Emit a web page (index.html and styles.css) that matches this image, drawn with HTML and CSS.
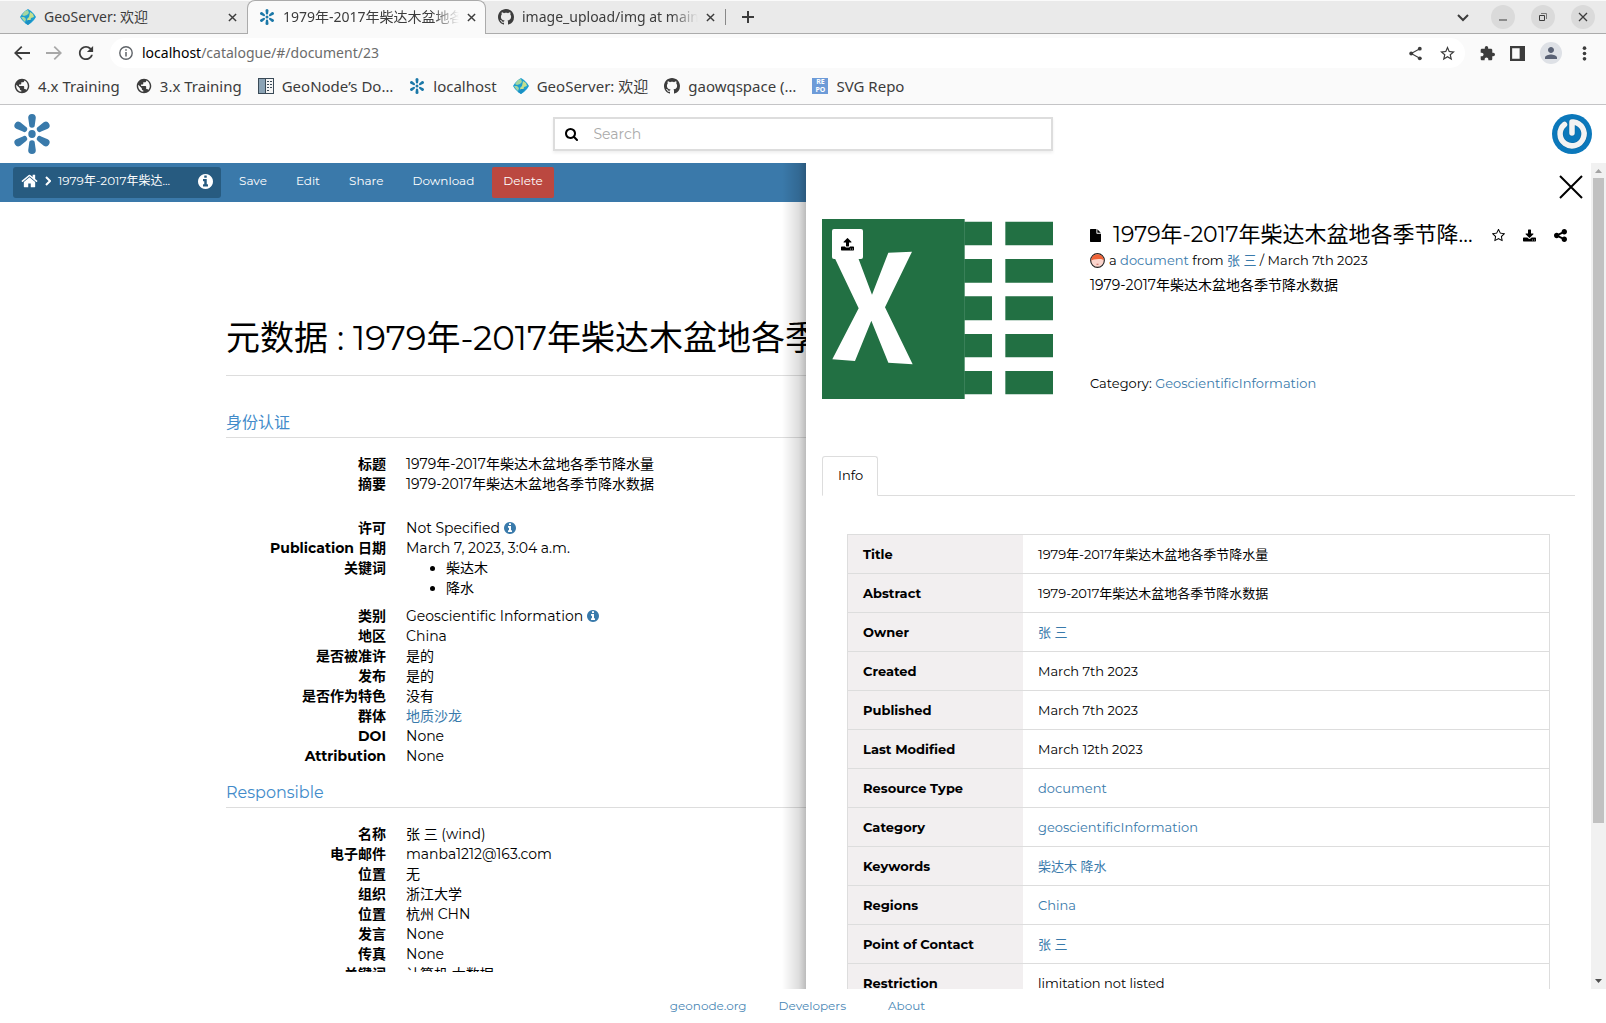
FILE: index.html
```html
<!DOCTYPE html>
<html lang="zh-CN">
<head>
<meta charset="utf-8">
<meta name="viewport" content="width=device-width, initial-scale=1">
<title>1979年-2017年柴达木盆地各季节降水量</title>
<link rel="stylesheet" href="styles.css">
</head>
<body>
<svg class="sprite" aria-hidden="true">
  <symbol id="geonode" viewBox="0 0 38 40">
    <ellipse cx="19" cy="20" rx="3.700" ry="3.900"/>
    <path d="M15.200 3.800a3.800 3.800 0 0 1 7.600 0L21.800 11a2.800 2.800 0 0 1-5.600 0z"/>
    <path d="M15.200 3.800a3.800 3.800 0 0 1 7.600 0L21.800 11a2.800 2.800 0 0 1-5.600 0z" transform="rotate(58 19 20)"/>
    <path d="M15.200 3.800a3.800 3.800 0 0 1 7.600 0L21.800 11a2.800 2.800 0 0 1-5.600 0z" transform="rotate(122 19 20)"/>
    <path d="M15.200 3.800a3.800 3.800 0 0 1 7.600 0L21.800 11a2.800 2.800 0 0 1-5.600 0z" transform="rotate(180 19 20)"/>
    <path d="M15.200 3.800a3.800 3.800 0 0 1 7.600 0L21.800 11a2.800 2.800 0 0 1-5.600 0z" transform="rotate(238 19 20)"/>
    <path d="M15.200 3.800a3.800 3.800 0 0 1 7.600 0L21.800 11a2.800 2.800 0 0 1-5.600 0z" transform="rotate(302 19 20)"/>
  </symbol>
  <symbol id="geoserver" viewBox="0 0 16 16">
    <path d="M8 0l3 2 3 3 2 3-2 3-3 3-3 2-3-2-3-3-2-3 2-3 3-3z" fill="#1d9fd0"/>
    <path d="M5 2l3-1 1 3-2 2-3 1-2-1zM1 8l3 0 2 2-1 3-2-2z" fill="#a5d6a0"/>
    <path d="M10 3l3 2 1 3-3 1-1 4-2 0-1-3 2-2z" fill="#c5df8c"/>
    <path d="M8 11l4 0-2 3-2 2-3-2z" fill="#1a8fc4"/>
  </symbol>
  <symbol id="github" viewBox="0 0 16 16"><path d="M8 0C3.580 0 0 3.580 0 8c0 3.540 2.290 6.530 5.470 7.590.4.070.55-.17.55-.38 0-.19-.01-.82-.01-1.490-2.010.37-2.530-.49-2.690-.94-.09-.23-.48-.94-.82-1.130-.28-.15-.68-.52-.01-.53.63-.01 1.080.58 1.230.82.72 1.210 1.870.87 2.330.66.07-.52.28-.87.51-1.070-1.780-.2-3.640-.89-3.640-3.950 0-.87.31-1.590.82-2.150-.08-.2-.36-1.020.08-2.120 0 0 .67-.21 2.200.82.64-.18 1.320-.27 2-.27s1.360.09 2 .27c1.530-1.040 2.200-.82 2.200-.82.44 1.100.16 1.920.08 2.120.51.56.82 1.270.82 2.150 0 3.070-1.870 3.750-3.650 3.950.29.25.54.73.54 1.480 0 1.070-.01 1.930-.01 2.200 0 .21.15.46.55.38A8.010 8.010 0 0 0 16 8c0-4.420-3.580-8-8-8z"/></symbol>
  <symbol id="globe" viewBox="1 1 22 22"><path d="M12 2C6.480 2 2 6.480 2 12s4.480 10 10 10 10-4.480 10-10S17.520 2 12 2zm-1 17.930c-3.950-.49-7-3.850-7-7.930 0-.62.08-1.210.21-1.790L9 15v1c0 1.100.9 2 2 2v1.930zm6.900-2.540c-.26-.81-1-1.390-1.900-1.390h-1v-3c0-.55-.45-1-1-1H8v-2h2c.55 0 1-.45 1-1V7h2c1.100 0 2-.9 2-2v-.41c2.930 1.190 5 4.060 5 7.410 0 2.080-.8 3.970-2.100 5.390z"/></symbol>
  <symbol id="cross" viewBox="0 0 10 10"><path d="M1 1l8 8M9 1L1 9" fill="none" stroke="currentColor" stroke-width="1.600"/></symbol>
  <symbol id="info" viewBox="128 128 1536 1536"><path d="M1152 1376v-160q0-14-9-23t-23-9h-96v-512q0-14-9-23t-23-9h-320q-14 0-23 9t-9 23v160q0 14 9 23t23 9h96v320h-96q-14 0-23 9t-9 23v160q0 14 9 23t23 9h448q14 0 23-9t9-23zm-128-896v-160q0-14-9-23t-23-9h-192q-14 0-23 9t-9 23v160q0 14 9 23t23 9h192q14 0 23-9t9-23zm640 416q0 209-103 385.500t-279.500 279.500-385.500 103-385.500-103-279.500-279.500-103-385.500 103-385.500 279.500-279.500 385.500-103 385.500 103 279.500 279.500 103 385.500z"/></symbol>
</svg>

<div class="browser">
  <div class="tabstrip">
    <div class="tab">
      <svg class="favicon"><use href="#geoserver"/></svg>
      <span class="tab-title">GeoServer: 欢迎</span>
      <button class="tab-close" aria-label="Close tab"><svg><use href="#cross"/></svg></button>
    </div>
    <div class="tab tab-active">
      <svg class="favicon brand"><use href="#geonode"/></svg>
      <span class="tab-title">1979年-2017年柴达木盆地各季</span>
      <button class="tab-close" aria-label="Close tab"><svg><use href="#cross"/></svg></button>
    </div>
    <div class="tab tab-last">
      <svg class="favicon"><use href="#github"/></svg>
      <span class="tab-title">image_upload/img at main</span>
      <button class="tab-close" aria-label="Close tab"><svg><use href="#cross"/></svg></button>
    </div>
    <button class="new-tab" aria-label="New tab"><svg viewBox="0 0 12 12"><path d="M6 0v12M0 6h12" stroke="currentColor" stroke-width="2"/></svg></button>
    <div class="window-controls">
      <button class="plain" aria-label="Search tabs"><svg viewBox="0 0 12 12"><path d="M1 4l5 5 5-5" fill="none" stroke="currentColor" stroke-width="2"/></svg></button>
      <button aria-label="Minimize"><svg viewBox="0 0 12 12"><path d="M2 9h8" stroke="currentColor"/></svg></button>
      <button aria-label="Restore"><svg viewBox="0 0 12 12"><path d="M2.500 4.500h5v5h-5z" fill="none" stroke="currentColor"/><path d="M4 2.500h5.500V8" fill="none" stroke="#777"/></svg></button>
      <button aria-label="Close window"><svg viewBox="0 0 12 12"><path d="M2 2l8 8M10 2l-8 8" stroke="currentColor" stroke-width="1.300"/></svg></button>
    </div>
  </div>

  <div class="navbar">
    <button class="nav-btn" aria-label="Back"><svg viewBox="3 3 18 18"><path d="M21 11H6.830l5.590-5.590L11 4l-8 8 8 8 1.410-1.410L6.830 13H21v-2z"/></svg></button>
    <button class="nav-btn nav-off" aria-label="Forward"><svg viewBox="3 3 18 18"><path d="M3 11h14.170l-5.590-5.590L13 4l8 8-8 8-1.410-1.410L17.170 13H3v-2z"/></svg></button>
    <button class="nav-btn" aria-label="Reload"><svg viewBox="3 3 18 18"><path d="M17.650 6.350C16.200 4.900 14.210 4 12 4c-4.420 0-7.990 3.580-7.990 8s3.570 8 7.990 8c3.730 0 6.840-2.550 7.730-6h-2.080c-.82 2.330-3.040 4-5.650 4-3.310 0-6-2.690-6-6s2.690-6 6-6c1.660 0 3.140.69 4.220 1.780L13 11h7V4l-2.350 2.350z"/></svg></button>
    <div class="omnibox">
      <svg class="site-info" viewBox="0 0 14 14"><circle cx="7" cy="7" r="6.200" fill="none" stroke="currentColor" stroke-width="1.400"/><path d="M7 6v4.500M7 3.300v1.500" stroke="currentColor" stroke-width="1.500"/></svg>
      <a class="url" href="#/document/23"><b>localhost</b>/catalogue/#/document/23</a>
      <button aria-label="Share page"><svg viewBox="0 0 14 14"><path d="M11 2.500L3 7l8 4.500" fill="none" stroke="currentColor"/><circle cx="11" cy="2.500" r="1.800"/><circle cx="3" cy="7" r="1.800"/><circle cx="11" cy="11.500" r="1.800"/></svg></button>
      <button aria-label="Bookmark"><svg viewBox="2 2 20 20"><path d="M22 9.240l-7.190-.62L12 2 9.190 8.630 2 9.240l5.460 4.730L5.820 21 12 17.270 18.180 21l-1.630-7.030L22 9.240zM12 15.400l-3.760 2.270 1-4.280-3.320-2.880 4.380-.38L12 6.100l1.710 4.040 4.380.38-3.320 2.880 1 4.280L12 15.400z"/></svg></button>
    </div>
    <div class="nav-tools">
      <button aria-label="Extensions"><svg viewBox="1 1 22 22"><path d="M20.500 11H19V7c0-1.100-.9-2-2-2h-4V3.500a2.500 2.500 0 0 0-5 0V5H4c-1.100 0-1.990.9-1.990 2v3.800H3.500c1.490 0 2.700 1.210 2.700 2.700s-1.210 2.700-2.700 2.700H2V20c0 1.100.9 2 2 2h3.800v-1.500c0-1.490 1.210-2.700 2.700-2.700s2.700 1.210 2.700 2.700V22H17c1.100 0 2-.9 2-2v-4h1.500a2.500 2.500 0 0 0 0-5z"/></svg></button>
      <button aria-label="Side panel"><svg viewBox="0 0 14 14"><path d="M0 0h14v14H0zM2 2v10h7V2z" fill-rule="evenodd"/></svg></button>
      <button class="profile" aria-label="Profile"><svg viewBox="4 4 16 16"><path d="M12 12c2.210 0 4-1.790 4-4s-1.790-4-4-4-4 1.790-4 4 1.790 4 4 4zm0 2c-2.670 0-8 1.340-8 4v2h16v-2c0-2.660-5.330-4-8-4z"/></svg></button>
      <button aria-label="Menu"><svg viewBox="0 0 14 14"><circle cx="7" cy="2" r="1.700"/><circle cx="7" cy="7" r="1.700"/><circle cx="7" cy="12" r="1.700"/></svg></button>
    </div>
  </div>

  <nav class="bookmarks">
    <a href="#"><svg><use href="#globe"/></svg>4.x Training</a>
    <a href="#"><svg><use href="#globe"/></svg>3.x Training</a>
    <a href="#"><svg viewBox="0 0 16 16"><path d="M0 0h16v16H0z" fill="#3a4a57"/><path d="M1 1h6v14H1z" fill="#8ba3b5"/><path d="M8 1h7v14H8z" fill="#f4f4f4"/><path d="M9 3.500h2M12 3.500h2M9 6.500h2M12 6.500h2M9 9.500h2M12 9.500h2M9 12.500h2" stroke="#3a4a57"/></svg>GeoNode’s Do…</a>
    <a href="#"><svg class="brand"><use href="#geonode"/></svg>localhost</a>
    <a href="#"><svg><use href="#geoserver"/></svg>GeoServer: 欢迎</a>
    <a href="#"><svg><use href="#github"/></svg>gaowqspace (…</a>
    <a href="#"><span class="repo-icon">RE<br>PO</span>SVG Repo</a>
  </nav>
</div>

<header class="site-header">
  <a class="logo" href="#" aria-label="GeoNode"><svg><use href="#geonode"/></svg></a>
  <label class="search">
    <svg viewBox="64 128 1664 1664" aria-hidden="true"><path d="M1216 832q0-185-131.500-316.500t-316.500-131.500-316.500 131.500-131.500 316.500 131.500 316.500 316.500 131.500 316.500-131.500 131.500-316.500zm512 832q0 52-38 90t-90 38q-54 0-90-38l-343-342q-179 124-399 124-143 0-273.500-55.500t-225-150-150-225-55.500-273.500 55.500-273.500 150-225 225-150 273.500-55.500 273.500 55.500 225 150 150 225 55.500 273.500q0 220-124 399l343 343q37 37 37 90z"/></svg>
    <input type="search" placeholder="Search" aria-label="Search">
  </label>
  <button class="account" aria-label="Account">
    <svg viewBox="0 0 40 40"><circle cx="20" cy="20" r="20" fill="#0b78bb"/><path d="M12.500 10.500a12 12 0 1 0 9-2.600L20 8v11" fill="none" stroke="#09578a" stroke-width="6.500" stroke-linecap="round" stroke-linejoin="round" opacity=".5"/><path d="M12.500 10.500a12 12 0 1 0 9-2.600L20 8v11" fill="none" stroke="#f3f3f3" stroke-width="5.500" stroke-linecap="round" stroke-linejoin="round"/></svg>
  </button>
</header>

<div class="workspace">
  <nav class="actionbar">
    <div class="crumb">
      <a href="#" aria-label="Home"><svg class="home" viewBox="32 224 1728 1344"><path d="M1472 992v480q0 26-19 45t-45 19h-384v-384h-256v384h-384q-26 0-45-19t-19-45v-480q0-1 .5-3t.5-3l575-474 575 474q1 2 1 6zm223-69l-62 74q-8 9-21 11h-3q-13 0-21-7l-692-577-692 577q-12 8-24 7-13-2-21-11l-62-74q-8-10-7-23.500t11-21.500l719-599q32-26 76-26t76 26l244 204v-195q0-14 9-23t23-9h192q14 0 23 9t9 23v408l219 182q10 8 11 21.500t-7 23.500z"/></svg></a>
      <svg class="chevron" viewBox="0 0 6 10"><path d="M1 1l4 4-4 4" fill="none" stroke="currentColor" stroke-width="2"/></svg>
      <span class="crumb-title">1979年-2017年柴达...</span>
      <button class="crumb-info" aria-label="Details"><svg><use href="#info"/></svg></button>
    </div>
    <button>Save</button>
    <button>Edit</button>
    <button>Share</button>
    <button>Download</button>
    <button class="danger">Delete</button>
  </nav>

  <main class="document">
    <h1>元数据 : 1979年-2017年柴达木盆地各季节降水量</h1>
    <h2>身份认证</h2>
    <dl>
      <dt>标题</dt><dd>1979年-2017年柴达木盆地各季节降水量</dd>
      <dt>摘要</dt><dd class="spaced">1979-2017年柴达木盆地各季节降水数据</dd>
      <dt>许可</dt><dd>Not Specified <svg class="hint"><use href="#info"/></svg></dd>
      <dt>Publication 日期</dt><dd>March 7, 2023, 3:04 a.m.</dd>
      <dt>关键词</dt><dd><ul><li>柴达木</li><li>降水</li></ul></dd>
      <dt>类别</dt><dd>Geoscientific Information <svg class="hint"><use href="#info"/></svg></dd>
      <dt>地区</dt><dd>China</dd>
      <dt>是否被准许</dt><dd>是的</dd>
      <dt>发布</dt><dd>是的</dd>
      <dt>是否作为特色</dt><dd>没有</dd>
      <dt>群体</dt><dd><a href="#">地质沙龙</a></dd>
      <dt>DOI</dt><dd>None</dd>
      <dt>Attribution</dt><dd>None</dd>
    </dl>
    <h2>Responsible</h2>
    <dl>
      <dt>名称</dt><dd>张 三 (wind)</dd>
      <dt>电子邮件</dt><dd>manba1212@163.com</dd>
      <dt>位置</dt><dd>无</dd>
      <dt>组织</dt><dd>浙江大学</dd>
      <dt>位置</dt><dd>杭州 CHN</dd>
      <dt>发言</dt><dd>None</dd>
      <dt>传真</dt><dd>None</dd>
      <dt>关键词</dt><dd>计算机 大数据</dd>
    </dl>
  </main>

  <aside class="panel">
    <div class="panel-body">
      <button class="panel-close" aria-label="Close panel"><svg viewBox="0 0 24 24"><path d="M1 1l22 22M23 1L1 23" stroke="currentColor" stroke-width="2"/></svg></button>
      <section class="summary">
        <div class="thumb">
          <svg class="thumb-img" viewBox="0 0 693 540" role="img" aria-label="Spreadsheet">
            <path d="M0 0h428v540H0z" fill="#227043"/>
            <path d="M427 8h83v71h-83zM427 120h83v71h-83zM427 232h83v72h-83zM427 345h83v70h-83zM427 456h83v70h-83zM550 8h143v71H550zM550 120h143v71H550zM550 232h143v72H550zM550 345h143v70H550zM550 456h143v70H550z" fill="#227043"/>
            <path d="M32 104l71-2 47 125 49-126 71-3-81 167 83 171-73-5-51-126-49 121-68-5 79-153z" fill="#fff"/>
          </svg>
          <button class="upload" aria-label="Upload thumbnail"><svg viewBox="64 64 1664 1664"><path d="M1344 1472q0-26-19-45t-45-19-45 19-19 45 19 45 45 19 45-19 19-45zm256 0q0-26-19-45t-45-19-45 19-19 45 19 45 45 19 45-19 19-45zm128-224v320q0 40-28 68t-68 28h-1472q-40 0-68-28t-28-68v-320q0-40 28-68t68-28h427q21 56 70.500 92t110.500 36h256q61 0 110.500-36t70.500-92h427q40 0 68 28t28 68zm-325-648q-17 40-59 40h-256v448q0 26-19 45t-45 19h-256q-26 0-45-19t-19-45v-448h-256q-42 0-59-40-17-39 14-69l448-448q18-19 45-19t45 19l448 448q31 30 14 69z"/></svg></button>
        </div>
        <div class="about">
          <div class="title-row">
            <svg class="file" viewBox="128 0 1536 1792"><path d="M1152 512v-472q22 14 36 28l408 408q14 14 28 36h-472zm-128 32q0 40 28 68t68 28h544v1056q0 40-28 68t-68 28h-1344q-40 0-68-28t-28-68v-1600q0-40 28-68t68-28h800v544z"/></svg>
            <h2>1979年-2017年柴达木盆地各季节降...</h2>
            <div class="title-actions">
              <button aria-label="Favorite"><svg viewBox="64 64 1664 1664"><path d="M1201 1004l306-297-422-62-189-382-189 382-422 62 306 297-73 421 378-199 377 199zm527-357q0 22-26 48l-363 354 86 500q1 7 1 20 0 50-41 50-19 0-40-12l-449-236-449 236q-22 12-40 12-21 0-31.500-14.500t-10.500-35.500q0-6 2-20l86-500-364-354q-25-27-25-48 0-37 56-46l502-73 225-455q19-41 49-41t49 41l225 455 502 73q56 9 56 46z"/></svg></button>
              <button aria-label="Download"><svg viewBox="64 0 1664 1536"><path d="M1344 1344q0-26-19-45t-45-19-45 19-19 45 19 45 45 19 45-19 19-45zm256 0q0-26-19-45t-45-19-45 19-19 45 19 45 45 19 45-19 19-45zm128-224v320q0 40-28 68t-68 28h-1472q-40 0-68-28t-28-68v-320q0-40 28-68t68-28h465l135 136q58 56 136 56t136-56l136-136h464q40 0 68 28t28 68zm-325-569q17 41-14 70l-448 448q-18 19-45 19t-45-19l-448-448q-31-29-14-70 17-39 59-39h256v-448q0-26 19-45t45-19h256q26 0 45 19t19 45v448h256q42 0 59 39z"/></svg></button>
              <button aria-label="Share"><svg viewBox="128 128 1536 1536"><path d="M1344 1024q133 0 226.500 93.500t93.500 226.500-93.500 226.500-226.500 93.500-226.500-93.500-93.500-226.500q0-12 2-34l-360-180q-92 86-218 86-133 0-226.500-93.500t-93.500-226.500 93.500-226.500 226.500-93.500q126 0 218 86l360-180q-2-22-2-34 0-133 93.500-226.500t226.500-93.500 226.500 93.500 93.500 226.500-93.500 226.500-226.500 93.500q-126 0-218-86l-360 180q2 22 2 34t-2 34l360 180q92-86 218-86z"/></svg></button>
            </div>
          </div>
          <p class="byline">
            <svg class="face" viewBox="0 0 16 16"><circle cx="8" cy="8" r="7.300" fill="#fbd5cd" stroke="#222" stroke-width="1.200"/><path d="M1.300 8a6.700 6.700 0 0 1 13.400 0c-1-.8-2-1.500-4-1.500S5 6.500 1.300 8z" fill="#ef6236"/><path d="M7 12h2" stroke="#c0605a"/></svg>
            <span>a <a href="#">document</a> from <a href="#">张 三</a> / March 7th 2023</span>
          </p>
          <p class="abstract">1979-2017年柴达木盆地各季节降水数据</p>
          <p class="category">Category: <a href="#">GeoscientificInformation</a></p>
        </div>
      </section>
      <div class="tabs"><button class="info-tab">Info</button></div>
      <table class="facts">
        <tbody>
          <tr><th scope="row">Title</th><td>1979年-2017年柴达木盆地各季节降水量</td></tr>
          <tr><th scope="row">Abstract</th><td>1979-2017年柴达木盆地各季节降水数据</td></tr>
          <tr><th scope="row">Owner</th><td><a href="#">张 三</a></td></tr>
          <tr><th scope="row">Created</th><td>March 7th 2023</td></tr>
          <tr><th scope="row">Published</th><td>March 7th 2023</td></tr>
          <tr><th scope="row">Last Modified</th><td>March 12th 2023</td></tr>
          <tr><th scope="row">Resource Type</th><td><a href="#">document</a></td></tr>
          <tr><th scope="row">Category</th><td><a href="#">geoscientificInformation</a></td></tr>
          <tr><th scope="row">Keywords</th><td><a href="#">柴达木</a> <a href="#">降水</a></td></tr>
          <tr><th scope="row">Regions</th><td><a href="#">China</a></td></tr>
          <tr><th scope="row">Point of Contact</th><td><a href="#">张 三</a></td></tr>
          <tr><th scope="row">Restriction</th><td>limitation not listed</td></tr>
        </tbody>
      </table>
    </div>
    <div class="scrollbar" aria-hidden="true">
      <svg class="arrow-up" viewBox="0 0 15 15"><path d="M4 10l3.500-4L11 10z"/></svg>
      <div class="track"><div class="track-thumb"></div></div>
      <svg class="arrow-down" viewBox="0 0 15 15"><path d="M4 5l3.500 4L11 5z"/></svg>
    </div>
  </aside>
</div>

<footer class="footer">
  <a href="#">geonode.org</a>
  <a href="#">Developers</a>
  <a class="footer-about" href="#">About</a>
</footer>
</body>
</html>
```
FILE: styles.css
```css
:root {
  --blue: #397aab;
  --line: #ddd;
  --ui: "Noto Sans", "Noto Sans CJK SC", sans-serif;
  --site: Montserrat, Inter, "Noto Sans CJK SC", sans-serif;
}

* { box-sizing: border-box; }

body {
  margin: 0;
  height: 100vh;
  display: flex;
  flex-direction: column;
  overflow: hidden;
  background: #fff;
  color: #000;
  font: 14px/20px var(--site);
}

button {
  margin: 0;
  padding: 0;
  border: 0;
  background: none;
  color: inherit;
  font: inherit;
}

svg { display: block; flex: none; fill: currentColor; }
a { color: var(--blue); text-decoration: none; }
h1, h2, p, dl, dd, ul { margin: 0; font-weight: 400; }
.sprite { position: absolute; width: 0; height: 0; }

/* Browser window */
.browser {
  flex: none;
  background: #fafafa;
  border-bottom: 1px solid #c4c4c6;
  color: #3c3c3c;
  font: 14px/20px var(--ui);
}

.tabstrip {
  display: flex;
  height: 34px;
  padding: 0 11px 0 8px;
  background: #eaeaea;
  box-shadow: inset 0 1px #fafafa, inset 0 -1px #ababab;
}

.tab {
  display: flex;
  align-items: center;
  gap: 8px;
  width: 239px;
  padding: 0 10px 0 12px;
}
.tab-active {
  background: #fafafa;
  border: 1px solid #ababab;
  border-bottom: 0;
  border-radius: 8px 8px 0 0;
  padding: 0 9px 1px 11px;
}
.tab-last .tab-title, .tab-active .tab-title {
  mask-image: linear-gradient(to right, #000 85%, transparent);
}
.tab-title { flex: 1; min-width: 0; overflow: hidden; white-space: nowrap; }
.favicon { width: 16px; height: 16px; }
.brand { color: #1b78a8; }
.tab-close svg { width: 9px; height: 9px; }
.new-tab { margin: 9px 0; padding: 0 16px; border-left: 1px solid #888; }
.new-tab svg { width: 12px; height: 12px; }

.window-controls { display: flex; align-items: center; gap: 16px; margin-left: auto; }
.window-controls button {
  display: grid;
  place-items: center;
  width: 24px;
  height: 24px;
  border-radius: 50%;
  background: #dadada;
}
.window-controls .plain { background: none; }
.window-controls svg { width: 12px; height: 12px; }

.navbar { display: flex; align-items: center; height: 38px; padding: 0 14px; }
.nav-btn svg { width: 16px; height: 16px; }
.nav-btn { margin-right: 16px; }
.nav-off { color: #a8a8a8; }
.omnibox {
  flex: 1;
  display: flex;
  align-items: center;
  height: 30px;
  gap: 17px;
  padding: 0 10px 0 9px;
  border-radius: 15px;
  background: #fff;
}
.omnibox button svg { width: 15px; height: 15px; }
.site-info { width: 14px; height: 14px; color: #5f6368; }
.url { flex: 1; margin-left: -8px; color: #6c6c6c; }
.url b { color: #000; font-weight: 400; }
.nav-tools { display: flex; align-items: center; gap: 15px; padding-left: 15px; }
.nav-tools svg { width: 15px; height: 15px; }
.nav-tools .profile { padding: 5px; border-radius: 50%; background: #dee1e6; color: #5a6275; }
.nav-tools .profile svg { width: 12px; height: 12px; }

.bookmarks { display: flex; gap: 16px; height: 32px; padding: 0 14px 4px; align-items: center; }
.bookmarks a { display: flex; align-items: center; gap: 8px; color: #3c3c3c; font-size: 15px; white-space: nowrap; }
.bookmarks svg { width: 16px; height: 16px; }
.repo-icon {
  width: 16px;
  height: 16px;
  background: #6d9bd8;
  color: #fff;
  font-size: 7px;
  line-height: 8px;
  font-weight: 700;
  text-align: center;
}

/* Site header */
.site-header {
  flex: none;
  display: grid;
  grid-template-columns: 1fr 500px 1fr;
  align-items: center;
  height: 58px;
  padding: 0 14px 0 13px;
}
.logo { color: var(--blue); }
.logo svg { width: 38px; height: 40px; }
.search {
  display: flex;
  align-items: center;
  gap: 16px;
  height: 34px;
  padding: 0 10px;
  border: 2px solid var(--line);
  box-shadow: 0 2px 3px #0001;
}
.search svg { width: 13px; height: 13px; }
.search input {
  flex: 1;
  border: 0;
  outline: 0;
  padding: 0;
  background: none;
  font: inherit;
}
.search input::placeholder { color: #aaa; }
.account { justify-self: end; }
.account svg { width: 40px; height: 40px; }

/* Work area */
.workspace {
  flex: 1;
  min-height: 0;
  position: relative;
  display: flex;
  flex-direction: column;
  padding-bottom: 17px;
}
.actionbar {
  flex: none;
  display: flex;
  align-items: center;
  gap: 7px;
  height: 39px;
  padding: 0 13px 1px;
  background: #3a79aa;
  color: #fff;
  font-size: 12px;
}
.actionbar > button { height: 31px; padding: 0 11px 2px; border-radius: 2px; }
.actionbar .danger { background: #bb4840; }
.crumb {
  display: flex;
  align-items: center;
  width: 208px;
  height: 31px;
  padding: 0 8px 2px;
  border-radius: 3px;
  background: #275b80;
}
.crumb a { color: #fff; }
.home { width: 17px; height: 14px; }
.chevron { width: 6px; height: 10px; margin: 0 7px; }
.crumb-title { flex: 1; white-space: nowrap; }
.crumb-info svg { width: 15px; height: 15px; }

.document { flex: 1; min-height: 0; overflow: hidden; padding: 112px 226px 0; }
.document h1 {
  height: 62px;
  border-bottom: 1px solid var(--line);
  font-size: 34px;
  line-height: 48px;
  white-space: nowrap;
}
.document h2 {
  height: 30px;
  margin: 32px 0 16px;
  border-bottom: 1px solid var(--line);
  color: #428bca;
  font-size: 16px;
  line-height: 30px;
}
.document dl + h2 { margin-top: 12px; }
.document dl { display: grid; grid-template-columns: 160px 1fr; column-gap: 20px; }
.document dt { font-weight: 700; text-align: right; line-height: 20px; }
.document dd { line-height: 20px; }
.document .spaced { padding-bottom: 24px; }
.document ul { padding-left: 40px; margin-bottom: 8px; }
.hint { display: inline-block; width: 12px; height: 12px; color: var(--blue); vertical-align: -1px; }

/* Details panel */
.panel {
  position: absolute;
  inset: 0 0 0 auto;
  width: calc(50% - 3px);
  display: flex;
  overflow: hidden;
  background: #fff;
  font-size: 13px;
}
.workspace::after {
  content: "";
  position: absolute;
  inset: 0 calc(50% - 3px) 0 auto;
  width: 24px;
  background: linear-gradient(to left, #0004, #0002 30%, #0000);
}
.panel-body { flex: 1; min-width: 0; padding: 12px 16px 0; }
.panel-close { display: block; margin: 0 -8px 0 auto; }
.panel-close svg { width: 24px; height: 24px; }
.summary { display: flex; gap: 37px; margin-top: 20px; height: 180px; }
.thumb { position: relative; flex: none; }
.thumb-img { width: 231px; height: 180px; }
.upload {
  position: absolute;
  left: 10px;
  top: 10px;
  display: grid;
  place-items: center;
  width: 31px;
  height: 30px;
  border-radius: 2px;
  background: #fff;
}
.upload svg { width: 13px; height: 13px; }
.about { flex: 1; min-width: 0; display: flex; flex-direction: column; }
.title-row { display: flex; align-items: center; gap: 12px; height: 32px; }
.file { width: 11px; height: 13px; }
.title-row h2 { flex: 1; min-width: 0; font-size: 22px; line-height: 32px; white-space: nowrap; }
.title-actions { display: flex; gap: 18px; padding-right: 8px; }
.title-actions svg { width: 13px; height: 13px; }
.byline { display: flex; align-items: center; gap: 4px; line-height: 18px; }
.face { width: 15px; height: 15px; }
.abstract { margin-top: 6px; font-size: 14px; }
.category { margin-top: 78px; }
.tabs { display: flex; margin-top: 57px; border-bottom: 1px solid var(--line); }
.info-tab {
  height: 40px;
  margin-bottom: -1px;
  padding: 0 14px 2px 15px;
  border: 1px solid var(--line);
  border-bottom-color: #fff;
  border-radius: 3px 3px 0 0;
}
.facts {
  width: calc(100% - 50px);
  margin: 38px 25px 0;
  border: 1px solid var(--line);
  border-collapse: collapse;
}
.facts tr { height: 39px; border-top: 1px solid var(--line); }
.facts th { width: 25%; padding: 0 15px 1px; background: #f2eff0; text-align: left; font-weight: 700; }
.facts td { padding: 0 15px 1px; }

.scrollbar { display: flex; flex-direction: column; width: 15px; background: #f1f1f1; }
.scrollbar svg { width: 15px; height: 15px; }
.arrow-up { color: #a3a3a3; }
.arrow-down { color: #505050; }
.track { flex: 1; padding: 0 2px; }
.track-thumb { height: 81%; background: #c1c1c1; }

.footer {
  flex: none;
  display: flex;
  justify-content: center;
  gap: 32px;
  height: 34px;
  padding-right: 11px;
  font-size: 12px;
  line-height: 34px;
}
.footer a { color: #4a87b5; }
.footer-about { margin-left: 10px; }
```
